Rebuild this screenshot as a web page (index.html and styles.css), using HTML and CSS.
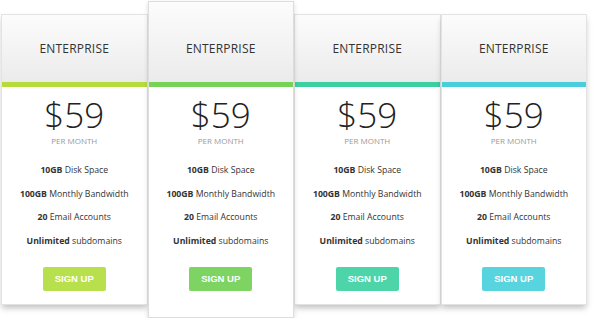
FILE: index.html
```html
<!DOCTYPE html>
<html lang="en">
<head>
    <meta charset="UTF-8">
    <title>Pricing Table</title>
    <link rel="stylesheet" href="styles.css">
</head>
<body>
    <div class="pricing">
        <!-- plan 1 -->
        <div class="plan plan-lime">
            <div class="plan-head">ENTERPRISE</div>
            <div class="plan-body">
                <div class="price">$59</div>
                <div class="period">PER MONTH</div>
                <ul class="features">
                    <li><b>10GB</b> Disk Space</li>
                    <li><b>100GB</b> Monthly Bandwidth</li>
                    <li><b>20</b> Email Accounts</li>
                    <li><b>Unlimited</b> subdomains</li>
                </ul>
                <a class="btn" href="#">SIGN UP</a>
            </div>
        </div>

        <!-- plan 2 (featured) -->
        <div class="plan plan-green featured">
            <div class="plan-head">ENTERPRISE</div>
            <div class="plan-body">
                <div class="price">$59</div>
                <div class="period">PER MONTH</div>
                <ul class="features">
                    <li><b>10GB</b> Disk Space</li>
                    <li><b>100GB</b> Monthly Bandwidth</li>
                    <li><b>20</b> Email Accounts</li>
                    <li><b>Unlimited</b> subdomains</li>
                </ul>
                <a class="btn" href="#">SIGN UP</a>
            </div>
        </div>

        <!-- plan 3 -->
        <div class="plan plan-teal">
            <div class="plan-head">ENTERPRISE</div>
            <div class="plan-body">
                <div class="price">$59</div>
                <div class="period">PER MONTH</div>
                <ul class="features">
                    <li><b>10GB</b> Disk Space</li>
                    <li><b>100GB</b> Monthly Bandwidth</li>
                    <li><b>20</b> Email Accounts</li>
                    <li><b>Unlimited</b> subdomains</li>
                </ul>
                <a class="btn" href="#">SIGN UP</a>
            </div>
        </div>

        <!-- plan 4 -->
        <div class="plan plan-cyan">
            <div class="plan-head">ENTERPRISE</div>
            <div class="plan-body">
                <div class="price">$59</div>
                <div class="period">PER MONTH</div>
                <ul class="features">
                    <li><b>10GB</b> Disk Space</li>
                    <li><b>100GB</b> Monthly Bandwidth</li>
                    <li><b>20</b> Email Accounts</li>
                    <li><b>Unlimited</b> subdomains</li>
                </ul>
                <a class="btn" href="#">SIGN UP</a>
            </div>
        </div>
    </div>
</body>
</html>
```

FILE: styles.css
```css
/* base */
* {
    margin: 0;
    padding: 0;
    box-sizing: border-box;
}

body {
    font-family: "Open Sans", "Liberation Sans", sans-serif;
    background: #ffffff;
    color: #333333;
}

/* pricing row */
.pricing {
    display: flex;
    align-items: center;
    width: 586px;
    margin-left: 1px;
    padding-top: 1px;
}

.plan {
    width: 146.5px;
    background: #ffffff;
    border: 1px solid #e3e3e3;
    box-shadow: 0 4px 6px -1px rgba(0, 0, 0, 0.25);
    text-align: center;
}

.plan-head {
    height: 72px;
    padding-top: 25px;
    background: linear-gradient(#fcfcfc, #ebebeb);
    font-size: 12px;
    letter-spacing: 0.2px;
    color: #333333;
    border-bottom: 5px solid #ccc;
}

.plan-body {
    padding: 10px 0 13px;
}

.featured {
    position: relative;
    z-index: 2;
    border-color: #dddddd;
    box-shadow: 0 2px 5px rgba(0, 0, 0, 0.15);
}

.featured .plan-head {
    height: 85px;
    padding-top: 38px;
}

.featured .plan-body {
    padding-bottom: 26px;
}

.price {
    font-size: 35px;
    font-weight: 300;
    line-height: 36px;
    color: #222222;
}

.period {
    margin-top: 3px;
    font-size: 8px;
    line-height: 10px;
    color: #999999;
}

.features {
    list-style: none;
    margin-top: 13px;
    font-size: 8.7px;
    color: #333333;
}

.features li {
    height: 23.5px;
    line-height: 23.5px;
}

.features b {
    font-weight: 700;
}

.btn {
    display: block;
    margin: 14px auto 0;
    width: 63px;
    height: 24px;
    line-height: 24px;
    border-radius: 2px;
    font-family: "Liberation Sans", Arial, sans-serif;
    font-size: 9.5px;
    font-weight: 700;
    color: #ffffff;
    text-decoration: none;
}

/* colour variants */
.plan-lime .plan-head { border-bottom-color: #b6dc3c; }
.plan-lime .btn { background: #b8e04c; }

.plan-green .plan-head { border-bottom-color: #77d258; }
.plan-green .btn { background: #7dd463; }

.plan-teal .plan-head { border-bottom-color: #3ccfa1; }
.plan-teal .btn { background: #4dd5a9; }

.plan-cyan .plan-head { border-bottom-color: #48cedc; }
.plan-cyan .btn { background: #58d4df; }
```
